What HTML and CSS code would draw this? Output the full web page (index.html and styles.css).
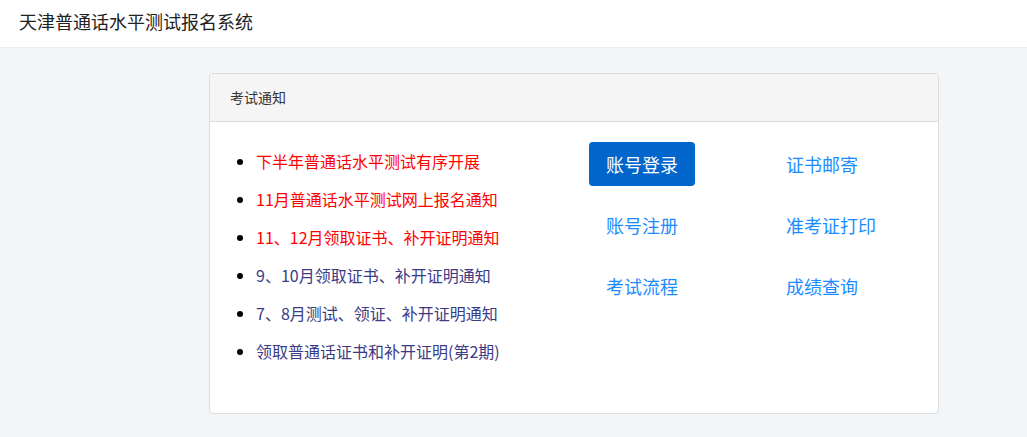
FILE: index.html
```html
<!DOCTYPE html>
<html lang="zh-CN">
<head>
<meta charset="utf-8">
<title>天津普通话水平测试报名系统</title>
<link rel="stylesheet" href="styles.css">
</head>
<body>
<header class="topbar">
  <div class="brand">天津普通话水平测试报名系统</div>
</header>
<main class="main">
  <section class="panel">
    <div class="panel-head">考试通知</div>
    <div class="panel-body">
      <ul class="notices">
        <li class="hot"><a href="#">下半年普通话水平测试有序开展</a></li>
        <li class="hot"><a href="#">11月普通话水平测试网上报名通知</a></li>
        <li class="hot"><a href="#">11、12月领取证书、补开证明通知</a></li>
        <li><a href="#">9、10月领取证书、补开证明通知</a></li>
        <li><a href="#">7、8月测试、领证、补开证明通知</a></li>
        <li><a href="#">领取普通话证书和补开证明(第2期)</a></li>
      </ul>
      <nav class="actions">
        <a class="act primary" href="#">账号登录</a>
        <a class="act" href="#">证书邮寄</a>
        <a class="act" href="#">账号注册</a>
        <a class="act" href="#">准考证打印</a>
        <a class="act" href="#">考试流程</a>
        <a class="act" href="#">成绩查询</a>
      </nav>
    </div>
  </section>
</main>
</body>
</html>
```
FILE: styles.css
```css
* { box-sizing: border-box; }
html, body { margin: 0; padding: 0; }
body {
  background: #f3f6f9;
  font-family: "Microsoft YaHei", "Noto Sans CJK SC", "Liberation Sans", sans-serif;
  color: #333;
  width: 1027px;
  height: 437px;
  overflow: hidden;
}
a { text-decoration: none; }
.topbar {
  height: 48px;
  background: #fff;
  border-bottom: 1px solid #eceff2;
  display: flex;
  align-items: center;
  padding-left: 19px;
}
.brand {
  font-size: 18px;
  color: #222;
  line-height: 1;
  margin-top: -6px;
}
.main {
  padding-top: 25px;
  padding-left: 209px;
}
.panel {
  width: 730px;
  height: 341px;
  background: #fff;
  border: 1px solid #dcdcdc;
  border-radius: 4px;
  overflow: hidden;
}
.panel-head {
  height: 48px;
  background: #f5f5f5;
  border-bottom: 1px solid #dcdcdc;
  font-size: 14px;
  color: #333;
  display: flex;
  align-items: center;
  padding-left: 20px;
  padding-bottom: 2px;
}
.panel-body {
  display: flex;
  padding-top: 20px;
}
.notices {
  flex: none;
  list-style: disc;
  margin: 0;
  padding: 0 0 0 46px;
  width: 379px;
}
.notices li {
  height: 38px;
  font-size: 16px;
  line-height: 38px;
  color: #000;
}
.notices a { color: #3b3b86; }
.notices li.hot a { color: #ff0000; }
.actions {
  flex: none;
  display: grid;
  grid-template-columns: 180px 160px;
  grid-auto-rows: 61px;
  align-content: start;
}
.act {
  justify-self: start;
  align-self: start;
  height: 44px;
  line-height: 44px;
  padding: 0 17px;
  font-size: 18px;
  color: #1a8cff;
}
.act.primary {
  background: #0066cc;
  color: #fff;
  border-radius: 4px;
}
```
